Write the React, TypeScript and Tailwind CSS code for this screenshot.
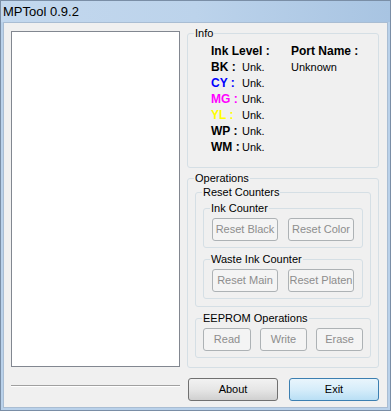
import React from "react";

const font = { fontFamily: '"Liberation Sans", Arial, sans-serif' };

function Group({
  label,
  className,
  legendClass,
  children,
}: {
  label: string;
  className: string;
  legendClass: string;
  children?: React.ReactNode;
}) {
  return (
    <fieldset className={"border border-[#d5dfe5] rounded-[3px] min-w-0 " + className}>
      <legend className={"px-[1px] text-[11px] leading-[13px] text-black " + legendClass}>{label}</legend>
      {children}
    </fieldset>
  );
}

function DisBtn({ label, className }: { label: string; className: string }) {
  return (
    <button
      disabled
      className={
        "h-[23px] rounded-[3px] border border-[#adb2b5] bg-[#f4f4f4] text-[11px] text-[#8d8d8d] flex items-center justify-center " +
        className
      }
    >
      {label}
    </button>
  );
}

function InkRow({ label, color }: { label: string; color: string }) {
  return (
    <div className="flex h-[16px] items-center">
      <span className="w-[31px] text-[12px] font-bold leading-[16px]" style={{ color }}>
        {label}
      </span>
      <span className="text-[11px] leading-[16px] text-black">Unk.</span>
    </div>
  );
}

export default function App() {
  return (
    <div
      className="w-[391px] h-[411px] bg-[#b9d1ea] flex flex-col overflow-hidden border border-[#7a8ea6] relative"
      style={font}
    >
      <div className="h-[21px] flex items-center pl-[2px] bg-gradient-to-r from-[#c3d8ee] via-[#bcd3eb] to-[#a8c4e2] shrink-0">
        <span className="text-[13px] text-black leading-none">MPTool 0.9.2</span>
      </div>
      <div className="flex-1 mx-[2px] mb-[2px] bg-[#f0f0f0] border border-[#a9bdd3] flex flex-row">
        {/* left column */}
        <div className="flex flex-col pl-[7px] pt-[8px] w-[176px]">
          <div className="w-[169px] h-[336px] bg-white border border-[#828790]" />
          <div className="mt-[18px] w-[169px] h-[2px] border-t border-[#a0a0a0] border-b border-b-white" />
        </div>
        {/* right column */}
        <div className="flex flex-col ml-[7px] w-[192px] pt-[4px]">
          <Group label="Info" className="pb-[12px]" legendClass="ml-[6px]">
            <div className="grid grid-cols-[80px_1fr] pl-[23px] pt-[3px]">
              <div className="flex flex-col">
                <div className="h-[16px] text-[12px] font-bold leading-[16px] text-black">Ink Level :</div>
                <InkRow label="BK :" color="#000000" />
                <InkRow label="CY :" color="#0000ff" />
                <InkRow label="MG :" color="#ff00ff" />
                <InkRow label="YL :" color="#ffff00" />
                <InkRow label="WP :" color="#000000" />
                <InkRow label="WM :" color="#000000" />
              </div>
              <div className="flex flex-col">
                <div className="h-[16px] text-[12px] font-bold leading-[16px] text-black">Port Name :</div>
                <div className="h-[16px] text-[11px] leading-[16px] text-black">Unknown</div>
              </div>
            </div>
          </Group>
          <Group label="Operations" className="mt-[4px] px-[7px] pt-[1px] pb-[9px]" legendClass="-ml-[1px]">
            <Group label="Reset Counters" className="px-[7px] pt-[3px] pb-[7px]" legendClass="-ml-[1px]">
              <Group label="Ink Counter" className="px-[8px] pt-[3px] pb-[6px]" legendClass="-ml-[2px]">
                <div className="flex gap-[10px]">
                  <DisBtn label="Reset Black" className="w-[66px]" />
                  <DisBtn label="Reset Color" className="w-[66px]" />
                </div>
              </Group>
              <Group label="Waste Ink Counter" className="mt-[5px] px-[8px] pt-[3px] pb-[6px]" legendClass="-ml-[2px]">
                <div className="flex gap-[10px]">
                  <DisBtn label="Reset Main" className="w-[66px]" />
                  <DisBtn label="Reset Platen" className="w-[66px]" />
                </div>
              </Group>
            </Group>
            <Group label="EEPROM Operations" className="mt-[5px] px-[7px] pt-[3px] pb-[6px]" legendClass="-ml-[1px]">
              <div className="flex gap-[9px]">
                <DisBtn label="Read" className="w-[48px]" />
                <DisBtn label="Write" className="w-[47px]" />
                <DisBtn label="Erase" className="w-[47px]" />
              </div>
            </Group>
          </Group>
          <div className="flex mt-[10px] ml-[1px] gap-[11px]">
            <button className="w-[90px] h-[23px] rounded-[3px] border border-[#707070] bg-gradient-to-b from-[#f2f2f2] via-[#e6e6e6] to-[#d0d0d0] text-[11px] text-black flex items-center justify-center">
              About
            </button>
            <button className="w-[90px] h-[23px] rounded-[3px] border border-[#3c7fb1] bg-gradient-to-b from-[#e9f5fc] via-[#d6edfa] to-[#b9dff5] text-[11px] text-black flex items-center justify-center">
              Exit
            </button>
          </div>
        </div>
      </div>
    </div>
  );
}
